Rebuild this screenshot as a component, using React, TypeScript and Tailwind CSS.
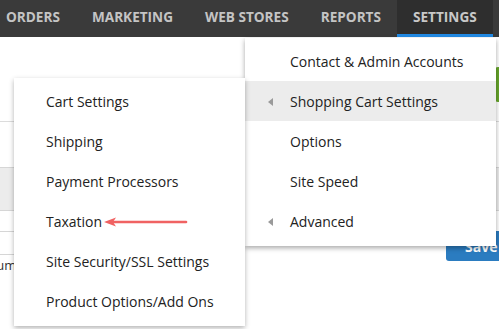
import React from "react";

const navItems = ["ORDERS", "MARKETING", "WEB STORES", "REPORTS"];

const rightItems: { label: string; arrow?: boolean; active?: boolean }[] = [
  { label: "Contact & Admin Accounts" },
  { label: "Shopping Cart Settings", arrow: true, active: true },
  { label: "Options" },
  { label: "Site Speed" },
  { label: "Advanced", arrow: true },
];

const leftItems = [
  "Cart Settings",
  "Shipping",
  "Payment Processors",
  "Taxation",
  "Site Security/SSL Settings",
  "Product Options/Add Ons",
];

function Tri() {
  return (
    <svg width="5" height="8" viewBox="0 0 5 8" className="absolute left-[23px] top-[17px]">
      <polygon points="5,0 0,4 5,8" fill="#9a9a9a" />
    </svg>
  );
}

export default function App() {
  return (
    <div
      className="relative w-[499px] h-[329px] overflow-hidden bg-white"
      style={{ fontFamily: '"Open Sans", "Liberation Sans", sans-serif' }}
    >
      {/* Nav */}
      <div className="flex h-[37px] bg-[#3a3a3a] pl-[6px]">
        {navItems.map((n, i) => (
          <div
            key={n}
            className={`flex items-center pb-[3px] pr-4 text-[13.6px] font-bold text-[#c4c4c4] whitespace-nowrap ${i === 0 ? "" : "pl-4"}`}
          >
            {n}
          </div>
        ))}
        <div className="flex items-center px-4 bg-[#2e2e2e] border-b-[3px] border-[#2189e3] text-[13.6px] font-bold text-[#c8c8c8] whitespace-nowrap">
          SETTINGS
        </div>
      </div>

      {/* Background content */}
      <div className="flex flex-col">
        <div className="flex justify-end h-[85px] border-b border-[#dcdcdc]">
          <div className="mt-[30px] mr-[-60px] w-[64px] h-[35px] bg-[#67a62b] rounded-[3px]" />
        </div>
        <div className="h-[45px]" />
        <div className="h-[44px] bg-[#ececec] border-t border-b border-[#d6d6d6]" />
        <div className="flex">
          <div className="flex flex-col w-[200px]">
            <div className="h-[21px] border-b border-[#d6d6d6]" />
            <div className="h-[23px] border-b border-[#d6d6d6]" />
            <div className="h-[22px] flex items-start pt-[2px]">
              <span className="ml-[-42px] text-[13px] leading-[16px] text-[#333]">Minimum</span>
            </div>
          </div>
          <div className="flex-1 flex justify-end">
            <div className="mt-[20px] mr-[-14px] w-[67px] h-[30px] rounded-[3px] bg-[#2b7cc0] flex items-center pl-[19px] text-[14px] font-bold text-white">
              Save
            </div>
          </div>
        </div>
        <div className="mt-[53px] pl-[14px] text-[13px] leading-[16px] text-[#333] whitespace-nowrap">
          ill to charge ANY to the customer at checkout time.
        </div>
      </div>

      {/* Right dropdown */}
      <div className="absolute left-[245px] top-[38px] w-[251px] pt-[3px] pb-[5px] bg-white shadow-[0_2px_5px_rgba(0,0,0,0.35)] z-10">
        {rightItems.map((it) => (
          <div
            key={it.label}
            className={`relative h-[40px] flex items-center pl-[45px] text-[14px] text-[#222] ${it.active ? "bg-[#ececec]" : ""}`}
          >
            {it.arrow && <Tri />}
            {it.label}
          </div>
        ))}
      </div>

      {/* Left dropdown */}
      <div className="absolute left-[14px] top-[78px] w-[231px] pt-[3px] pb-[5px] bg-white shadow-[0_2px_5px_rgba(0,0,0,0.3)] z-20">
        {leftItems.map((l) => (
          <div key={l} className="h-[40px] flex items-center pl-[32px] text-[14px] text-[#222]">
            {l}
          </div>
        ))}
      </div>

      {/* Red arrow annotation */}
      <svg
        width="86"
        height="12"
        viewBox="0 0 86 12"
        className="absolute left-[104px] top-[216px] z-30"
      >
        <line x1="9" y1="6" x2="82" y2="6" stroke="#f06262" strokeWidth="2.6" strokeLinecap="round" />
        <polygon points="0,6 12,1.5 9,6 12,10.5" fill="#f06262" />
      </svg>
    </div>
  );
}
